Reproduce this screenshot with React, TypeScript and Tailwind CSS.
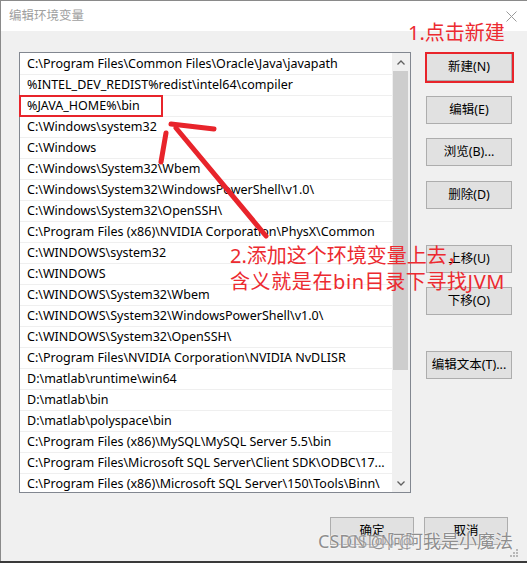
import React from 'react';

const PATHS = [
  'C:\\Program Files\\Common Files\\Oracle\\Java\\javapath',
  '%INTEL_DEV_REDIST%redist\\intel64\\compiler',
  '%JAVA_HOME%\\bin',
  'C:\\Windows\\system32',
  'C:\\Windows',
  'C:\\Windows\\System32\\Wbem',
  'C:\\Windows\\System32\\WindowsPowerShell\\v1.0\\',
  'C:\\Windows\\System32\\OpenSSH\\',
  'C:\\Program Files (x86)\\NVIDIA Corporation\\PhysX\\Common',
  'C:\\WINDOWS\\system32',
  'C:\\WINDOWS',
  'C:\\WINDOWS\\System32\\Wbem',
  'C:\\WINDOWS\\System32\\WindowsPowerShell\\v1.0\\',
  'C:\\WINDOWS\\System32\\OpenSSH\\',
  'C:\\Program Files\\NVIDIA Corporation\\NVIDIA NvDLISR',
  'D:\\matlab\\runtime\\win64',
  'D:\\matlab\\bin',
  'D:\\matlab\\polyspace\\bin',
  'C:\\Program Files (x86)\\MySQL\\MySQL Server 5.5\\bin',
  'C:\\Program Files\\Microsoft SQL Server\\Client SDK\\ODBC\\17...',
  'C:\\Program Files (x86)\\Microsoft SQL Server\\150\\Tools\\Binn\\',
];

// side buttons: label + gap from the previous one
const SIDE_BUTTONS = [
  { label: '新建(N)', mt: 'mt-[1px]' },
  { label: '编辑(E)', mt: 'mt-[15px]' },
  { label: '浏览(B)...', mt: 'mt-[14px]' },
  { label: '删除(D)', mt: 'mt-[15px]' },
  { label: '上移(U)', mt: 'mt-[36px]' },
  { label: '下移(O)', mt: 'mt-[14px]' },
  { label: '编辑文本(T)...', mt: 'mt-[36px]' },
];

const WinButton: React.FC<{ label: string; className?: string }> = ({ label, className = '' }) => (
  <div
    className={`flex h-[28px] items-start justify-center border border-[#adadad] bg-[#e1e1e1] pt-[4px] text-[12.5px] leading-[18px] text-black ${className}`}
  >
    {label}
  </div>
);

export default function App() {
  return (
    <div className="relative h-[563px] w-[527px] overflow-hidden bg-[#3a3a3a] font-['Noto_Sans','Noto_Sans_CJK_SC',sans-serif]">
      <div className="flex h-[561px] flex-col border-l border-t border-[#8a8a8a] bg-[#f0f0f0]">
        {/* Title bar */}
        <div className="flex h-[30px] items-center justify-between bg-white pl-[8px] pr-[10px]">
          <span className="text-[12.5px] text-[#a0a0a0]">编辑环境变量</span>
          <svg width="11" height="11" viewBox="0 0 11 11">
            <path d="M0.5 0.5 L10.5 10.5 M10.5 0.5 L0.5 10.5" stroke="#9a9a9a" strokeWidth="1" />
          </svg>
        </div>

        {/* Body */}
        <div className="flex pl-[18px] pt-[21px]">
          {/* List box */}
          <div className="flex h-[441px] w-[392px] overflow-hidden border border-[#828790] bg-white">
            <div className="w-[372px] overflow-hidden pt-[1px]">
              {PATHS.map((p) => (
                <div
                  key={p}
                  className="flex h-[21px] items-center truncate whitespace-nowrap border-b border-[#efefef] pl-[7px] text-[12.5px] text-black"
                >
                  {p}
                </div>
              ))}
            </div>
            {/* Scrollbar */}
            <div className="flex w-[18px] flex-col bg-[#f0f0f0]">
              <div className="flex h-[18px] items-center justify-center">
                <svg width="8" height="5" viewBox="0 0 8 5">
                  <path d="M0.5 4.5 L4 1 L7.5 4.5" fill="none" stroke="#606060" strokeWidth="1.3" />
                </svg>
              </div>
              <div className="ml-[1px] h-[299px] w-[15px] bg-[#cdcdcd]" />
              <div className="flex-1" />
              <div className="flex h-[18px] items-center justify-center">
                <svg width="8" height="5" viewBox="0 0 8 5">
                  <path d="M0.5 0.5 L4 4 L7.5 0.5" fill="none" stroke="#606060" strokeWidth="1.3" />
                </svg>
              </div>
            </div>
          </div>

          {/* Side buttons */}
          <div className="ml-[15px] flex w-[86px] flex-col">
            {SIDE_BUTTONS.map((b) => (
              <WinButton key={b.label} label={b.label} className={b.mt} />
            ))}
          </div>
        </div>

        {/* Bottom buttons */}
        <div className="mt-[24px] flex gap-[10px] pl-[329px]">
          <WinButton label="确定" className="w-[84px]" />
          <WinButton label="取消" className="w-[84px]" />
        </div>
      </div>

      {/* Resize grip */}
      <svg className="absolute left-[510px] top-[549px]" width="9" height="9" viewBox="0 0 9 9">
        <rect x="6" y="0" width="2" height="2" fill="#b8b8b8" />
        <rect x="3" y="3" width="2" height="2" fill="#b8b8b8" />
        <rect x="6" y="3" width="2" height="2" fill="#b8b8b8" />
        <rect x="0" y="6" width="2" height="2" fill="#b8b8b8" />
        <rect x="3" y="6" width="2" height="2" fill="#b8b8b8" />
        <rect x="6" y="6" width="2" height="2" fill="#b8b8b8" />
      </svg>

      {/* Annotations */}
      <div className="absolute left-[19px] top-[95px] h-[22px] w-[144px] border-2 border-[#e8242b]" />
      <div className="absolute left-[425px] top-[52px] h-[31px] w-[89px] border-2 border-[#e8242b]" />

      <div className="absolute left-[408px] top-[22px] whitespace-nowrap text-[20px] leading-[22px] text-[#ec2a30]">
        1.点击新建
      </div>
      <div className="absolute left-[230px] top-[243px] whitespace-nowrap text-[20px] leading-[26px] text-[#ec2a30]">
        <div>2.添加这个环境变量上去，</div>
        <div className="tracking-[0.6px]">含义就是在bin目录下寻找JVM</div>
      </div>

      <svg className="absolute left-0 top-0" width="527" height="563" viewBox="0 0 527 563">
        <g stroke="#e8242b" strokeWidth="5" strokeLinecap="round" fill="none">
          <path d="M176 128 L266 236" />
          <path d="M171 124 L214 129" />
          <path d="M166 133 L161 162" />
        </g>
      </svg>

      {/* Watermark */}
      <div className="absolute left-[318px] top-[528px] whitespace-nowrap text-[18px] text-[#8e8e8e] [text-shadow:0_0_2px_#fff,0_0_1px_#fff]">
        CSDN @阿阿我是小魔法
      </div>
      <div className="absolute left-[346px] top-[528px] whitespace-nowrap text-[18px] text-[#8e8e8e] opacity-70 [text-shadow:0_0_2px_#fff,0_0_1px_#fff]">
        CSDN @
      </div>
    </div>
  );
}
